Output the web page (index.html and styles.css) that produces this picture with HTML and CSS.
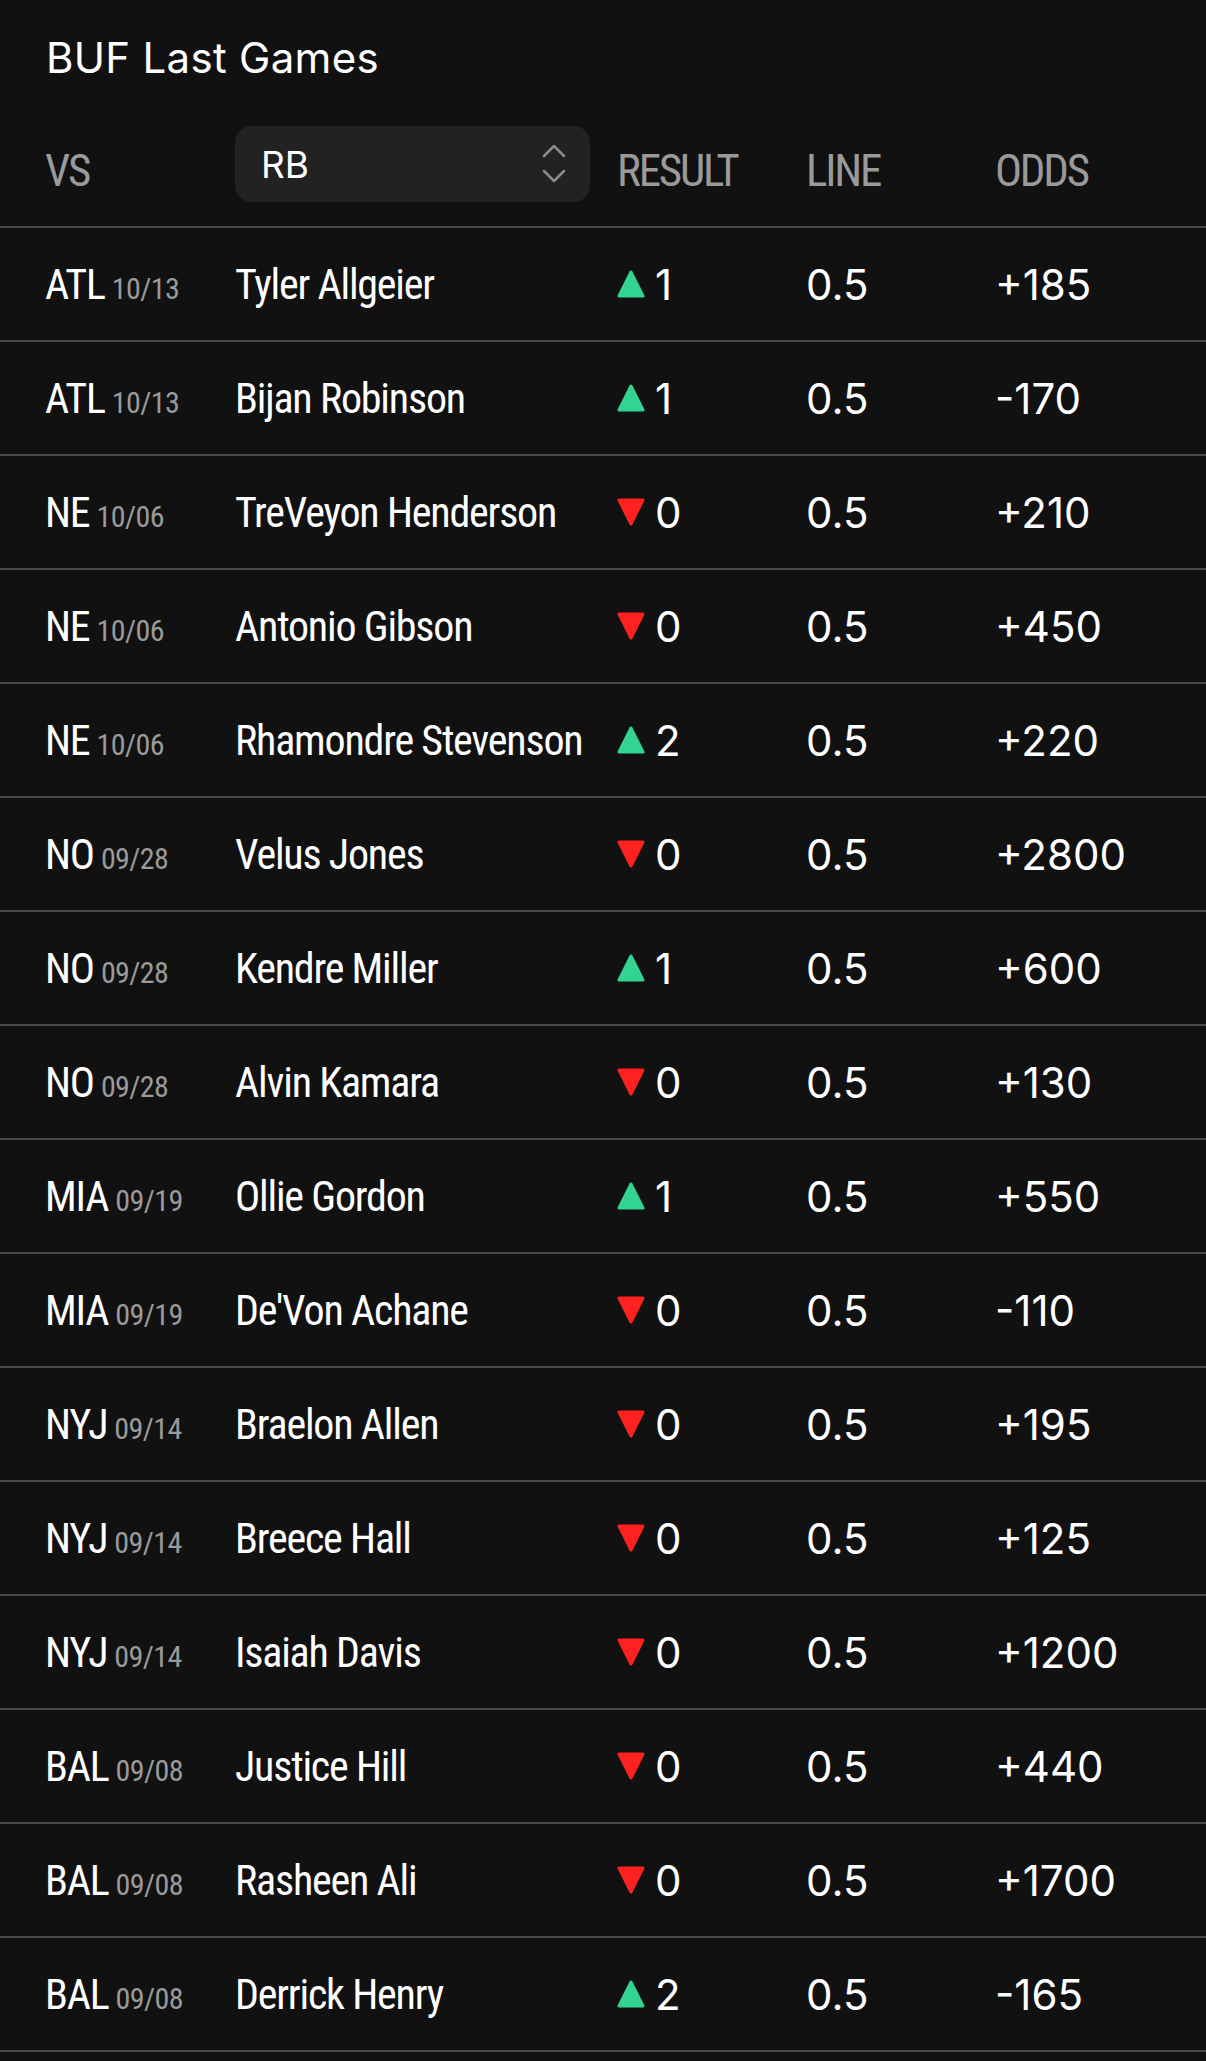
FILE: index.html
```html
<!DOCTYPE html>
<html lang="en">
<head>
<meta charset="utf-8">
<title>BUF Last Games</title>
<link rel="stylesheet" href="styles.css">
</head>
<body>
<main class="page">
  <h1 class="title">BUF Last Games</h1>
  <div class="table">
    <div class="row head">
      <div class="hcell">VS</div>
      <div class="pos">
        <div class="select">
          <span class="select-val">RB</span>
          <svg class="chev" width="24" height="40" viewBox="0 0 24 40"><path d="M2 12 L12 2 L22 12" /><path d="M2 27 L12 37 L22 27" /></svg>
        </div>
      </div>
      <div class="hcell">RESULT</div>
      <div class="hcell">LINE</div>
      <div class="hcell">ODDS</div>
    </div>

    <div class="row"><div class="team">ATL<span class="date">10/13</span></div><div class="name">Tyler Allgeier</div><div class="res"><svg class="tri up" viewBox="0 0 28 28"><path d="M14 2 L26 26 L2 26 Z"/></svg><span>1</span></div><div class="num">0.5</div><div class="num">+185</div></div>
    <div class="row"><div class="team">ATL<span class="date">10/13</span></div><div class="name">Bijan Robinson</div><div class="res"><svg class="tri up" viewBox="0 0 28 28"><path d="M14 2 L26 26 L2 26 Z"/></svg><span>1</span></div><div class="num">0.5</div><div class="num">-170</div></div>
    <div class="row"><div class="team">NE<span class="date">10/06</span></div><div class="name">TreVeyon Henderson</div><div class="res"><svg class="tri down" viewBox="0 0 28 28"><path d="M2 2 L26 2 L14 26 Z"/></svg><span>0</span></div><div class="num">0.5</div><div class="num">+210</div></div>
    <div class="row"><div class="team">NE<span class="date">10/06</span></div><div class="name">Antonio Gibson</div><div class="res"><svg class="tri down" viewBox="0 0 28 28"><path d="M2 2 L26 2 L14 26 Z"/></svg><span>0</span></div><div class="num">0.5</div><div class="num">+450</div></div>
    <div class="row"><div class="team">NE<span class="date">10/06</span></div><div class="name">Rhamondre Stevenson</div><div class="res"><svg class="tri up" viewBox="0 0 28 28"><path d="M14 2 L26 26 L2 26 Z"/></svg><span>2</span></div><div class="num">0.5</div><div class="num">+220</div></div>
    <div class="row"><div class="team">NO<span class="date">09/28</span></div><div class="name">Velus Jones</div><div class="res"><svg class="tri down" viewBox="0 0 28 28"><path d="M2 2 L26 2 L14 26 Z"/></svg><span>0</span></div><div class="num">0.5</div><div class="num">+2800</div></div>
    <div class="row"><div class="team">NO<span class="date">09/28</span></div><div class="name">Kendre Miller</div><div class="res"><svg class="tri up" viewBox="0 0 28 28"><path d="M14 2 L26 26 L2 26 Z"/></svg><span>1</span></div><div class="num">0.5</div><div class="num">+600</div></div>
    <div class="row"><div class="team">NO<span class="date">09/28</span></div><div class="name">Alvin Kamara</div><div class="res"><svg class="tri down" viewBox="0 0 28 28"><path d="M2 2 L26 2 L14 26 Z"/></svg><span>0</span></div><div class="num">0.5</div><div class="num">+130</div></div>
    <div class="row"><div class="team">MIA<span class="date">09/19</span></div><div class="name">Ollie Gordon</div><div class="res"><svg class="tri up" viewBox="0 0 28 28"><path d="M14 2 L26 26 L2 26 Z"/></svg><span>1</span></div><div class="num">0.5</div><div class="num">+550</div></div>
    <div class="row"><div class="team">MIA<span class="date">09/19</span></div><div class="name">De'Von Achane</div><div class="res"><svg class="tri down" viewBox="0 0 28 28"><path d="M2 2 L26 2 L14 26 Z"/></svg><span>0</span></div><div class="num">0.5</div><div class="num">-110</div></div>
    <div class="row"><div class="team">NYJ<span class="date">09/14</span></div><div class="name">Braelon Allen</div><div class="res"><svg class="tri down" viewBox="0 0 28 28"><path d="M2 2 L26 2 L14 26 Z"/></svg><span>0</span></div><div class="num">0.5</div><div class="num">+195</div></div>
    <div class="row"><div class="team">NYJ<span class="date">09/14</span></div><div class="name">Breece Hall</div><div class="res"><svg class="tri down" viewBox="0 0 28 28"><path d="M2 2 L26 2 L14 26 Z"/></svg><span>0</span></div><div class="num">0.5</div><div class="num">+125</div></div>
    <div class="row"><div class="team">NYJ<span class="date">09/14</span></div><div class="name">Isaiah Davis</div><div class="res"><svg class="tri down" viewBox="0 0 28 28"><path d="M2 2 L26 2 L14 26 Z"/></svg><span>0</span></div><div class="num">0.5</div><div class="num">+1200</div></div>
    <div class="row"><div class="team">BAL<span class="date">09/08</span></div><div class="name">Justice Hill</div><div class="res"><svg class="tri down" viewBox="0 0 28 28"><path d="M2 2 L26 2 L14 26 Z"/></svg><span>0</span></div><div class="num">0.5</div><div class="num">+440</div></div>
    <div class="row"><div class="team">BAL<span class="date">09/08</span></div><div class="name">Rasheen Ali</div><div class="res"><svg class="tri down" viewBox="0 0 28 28"><path d="M2 2 L26 2 L14 26 Z"/></svg><span>0</span></div><div class="num">0.5</div><div class="num">+1700</div></div>
    <div class="row"><div class="team">BAL<span class="date">09/08</span></div><div class="name">Derrick Henry</div><div class="res"><svg class="tri up" viewBox="0 0 28 28"><path d="M14 2 L26 26 L2 26 Z"/></svg><span>2</span></div><div class="num">0.5</div><div class="num">-165</div></div>
  </div>
</main>
</body>
</html>
```
FILE: styles.css
```css
html, body {
  margin: 0;
  padding: 0;
  background: #111111;
}
.page {
  padding-top: 33px;
  color: #ffffff;
}
.title {
  margin: 0 0 0 46px;
  font-family: "Inter", "Liberation Sans", sans-serif;
  font-weight: 400;
  font-size: 42px;
  line-height: 50px;
  letter-spacing: 0.3px;
}
.row {
  display: grid;
  grid-template-columns: 190px 382px 189px 189px 1fr;
  align-items: center;
  padding-left: 45px;
  height: 112px;
  border-bottom: 2px solid #4a4a4a;
}
.row.head {
  height: 76px;
  padding-top: 43px;
  padding-bottom: 24px;
}
.hcell {
  font-family: "Roboto", "Liberation Sans", sans-serif;
  font-stretch: 75%;
  font-size: 45px;
  color: #9a9a9a;
  letter-spacing: -2.2px;
  padding-top: 12px;
}
.select {
  width: 355px;
  height: 76px;
  box-sizing: border-box;
  background: #222222;
  border-radius: 16px;
  display: flex;
  align-items: center;
  justify-content: space-between;
  padding: 0 24px 0 26px;
}
.select-val {
  font-family: "Inter", "Liberation Sans", sans-serif;
  font-size: 37px;
  color: #ffffff;
}
.chev {
  fill: none;
  stroke: #8c8c8c;
  stroke-width: 2.5;
  stroke-linecap: round;
  stroke-linejoin: round;
}
.team, .name {
  font-family: "Roboto", "Liberation Sans", sans-serif;
  font-stretch: 75%;
  font-size: 42px;
  letter-spacing: -1.2px;
  white-space: nowrap;
}
.date {
  font-size: 30px;
  color: #9a9a9a;
  margin-left: 7px;
  letter-spacing: -0.6px;
}
.res {
  display: flex;
  align-items: center;
  gap: 10px;
  font-family: "Inter", "Liberation Sans", sans-serif;
  font-size: 42px;
}
.tri {
  width: 28px;
  height: 28px;
  stroke-width: 3;
  stroke-linejoin: round;
}
.tri.up { fill: #33d391; stroke: #33d391; }
.tri.down { fill: #ff2020; stroke: #ff2020; }
.num {
  font-family: "Inter", "Liberation Sans", sans-serif;
  font-size: 42px;
  white-space: nowrap;
}
```
